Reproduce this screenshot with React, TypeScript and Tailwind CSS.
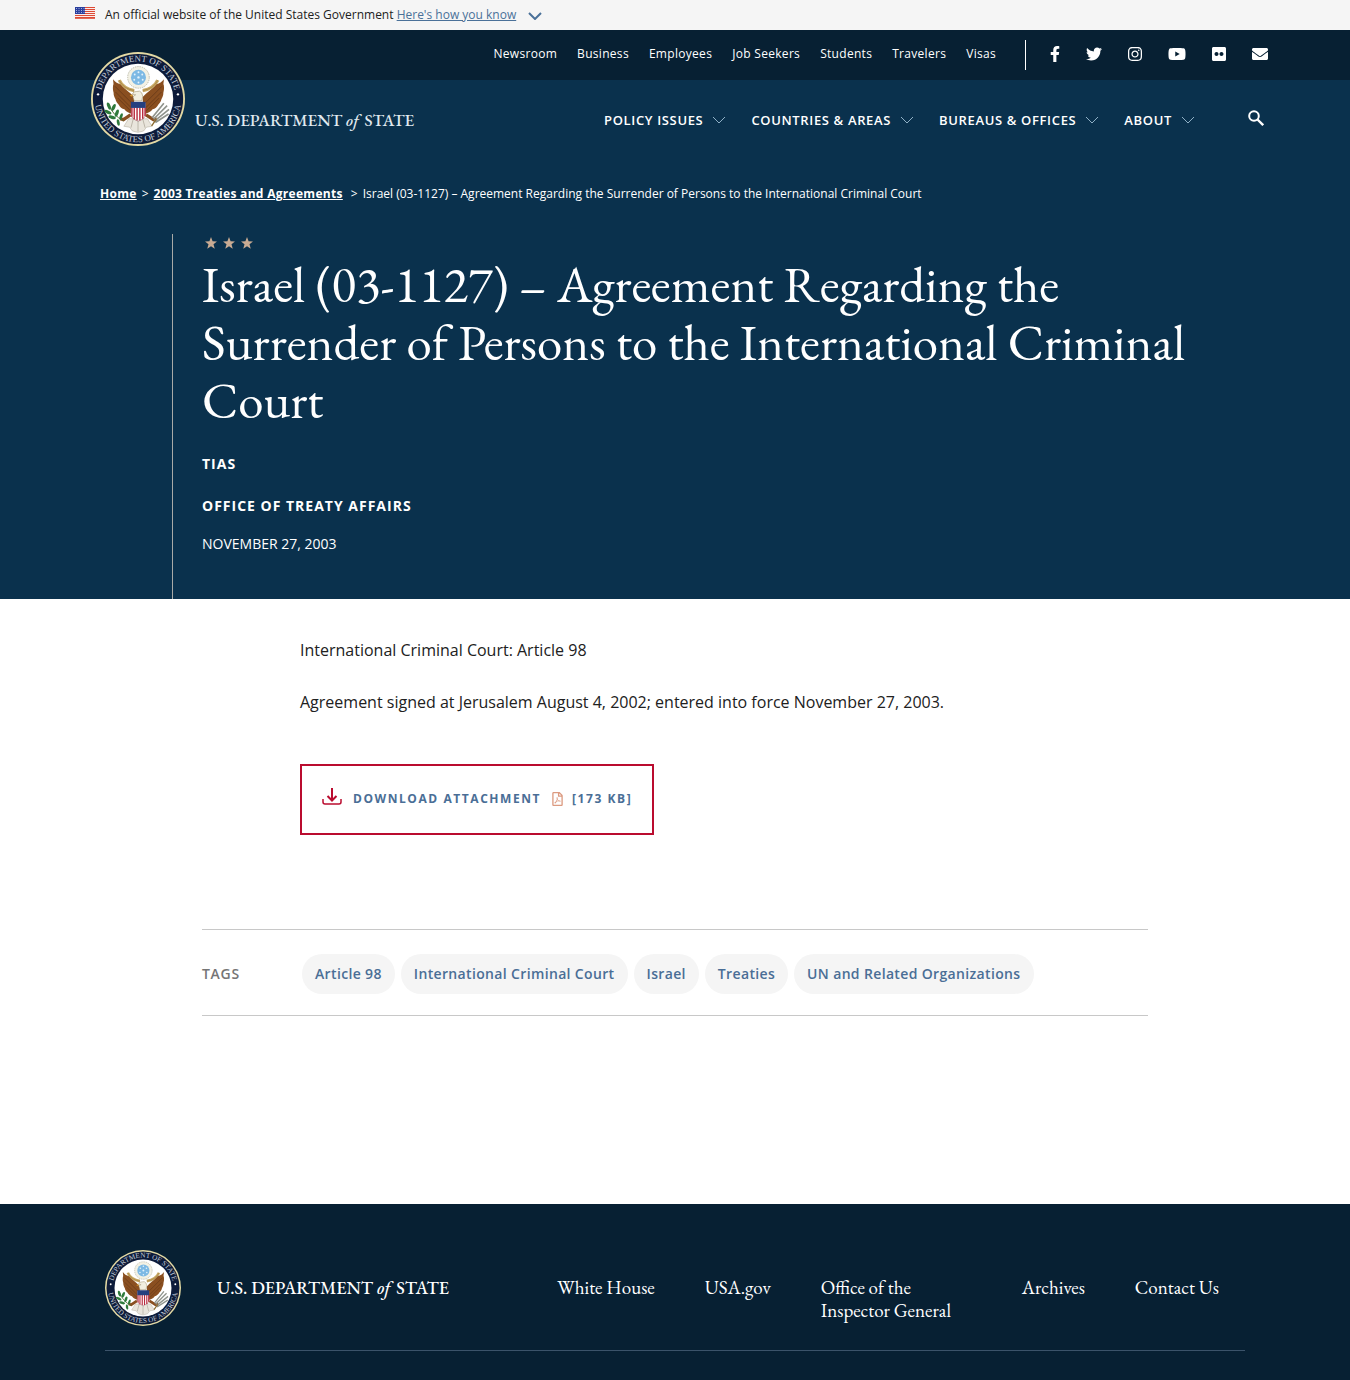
import React, { useId } from "react";
import {
  FaEnvelope,
  FaFacebookF,
  FaFlickr,
  FaInstagram,
  FaRegFilePdf,
  FaTwitter,
  FaYoutube,
} from "react-icons/fa";

const utilityLinks = ["Newsroom", "Business", "Employees", "Job Seekers", "Students", "Travelers", "Visas"];

const socialLinks = [
  { label: "Facebook", Icon: FaFacebookF, size: "h-4 w-2.5" },
  { label: "Twitter", Icon: FaTwitter, size: "h-4 w-4" },
  { label: "Instagram", Icon: FaInstagram, size: "h-4 w-3.5" },
  { label: "YouTube", Icon: FaYoutube, size: "h-4 w-[18px]" },
  { label: "Flickr", Icon: FaFlickr, size: "h-4 w-3.5" },
  { label: "Email", Icon: FaEnvelope, size: "h-4 w-4" },
];

const menus = ["Policy Issues", "Countries & Areas", "Bureaus & Offices", "About"];

const tags = ["Article 98", "International Criminal Court", "Israel", "Treaties", "UN and Related Organizations"];

function Flag() {
  return (
    <svg viewBox="0 0 20 12" className="h-3 w-5" aria-hidden="true">
      <rect width="20" height="12" fill="#fff" />
      {[0, 2, 4, 6, 8, 10].map((y) => (
        <rect key={y} y={y} width="20" height="1.1" fill="#dc4a35" />
      ))}
      <rect y="11.2" width="20" height="0.8" fill="#dc4a35" />
      <rect width="10" height="7" fill="#2a3f9d" />
      {[1.5, 3.5, 5.5].map((y) =>
        [1.5, 4, 6.5, 9].map((x) => <circle key={`${x}-${y}`} cx={x} cy={y} r="0.5" fill="#c9d2f5" />),
      )}
    </svg>
  );
}

function Seal({ className }: { className: string }) {
  const id = useId();
  return (
    <svg viewBox="0 0 200 200" className={className} role="img" aria-label="Department of State seal">
      <defs>
        <path id={`${id}t`} d="M20 100a80 80 0 0 1 160 0" />
        <path id={`${id}b`} d="M8 100a92 92 0 0 0 184 0" />
      </defs>
      <circle cx="100" cy="100" r="100" fill="#e3d9a4" />
      <circle cx="100" cy="100" r="96" fill="#0d1b3a" />
      <circle cx="100" cy="100" r="75" fill="#fff" />
      <g fill="#c3ccd9" fontFamily="Liberation Serif, serif" textAnchor="middle">
        <text fontSize="19">
          <textPath href={`#${id}t`} startOffset="50%">DEPARTMENT OF STATE</textPath>
        </text>
        <text fontSize="19">
          <textPath href={`#${id}b`} startOffset="50%">UNITED STATES OF AMERICA</textPath>
        </text>
      </g>
      <circle cx="15" cy="90" r="2.5" fill="#fff" />
      <circle cx="185" cy="90" r="2.5" fill="#fff" />
      {/* glory of stars above the eagle */}
      <circle cx="101" cy="54" r="23" fill="#f3f1e4" stroke="#b9b7a8" strokeWidth="2" strokeDasharray="3 2" />
      <circle cx="101" cy="54" r="16" fill="#7db9e4" />
      <g fill="#e4f3fc">
        <circle cx="101" cy="43" r="2" />
        <circle cx="93" cy="48" r="2" />
        <circle cx="109" cy="48" r="2" />
        <circle cx="101" cy="54" r="2.5" />
        <circle cx="92" cy="59" r="2" />
        <circle cx="110" cy="59" r="2" />
        <circle cx="101" cy="65" r="2" />
      </g>
      {/* scroll */}
      <path d="M60 60q8 18 32 22M142 60q-8 18-32 22" fill="none" stroke="#c9a964" strokeWidth="7" />
      <path d="M60 60q8 18 32 22M142 60q-8 18-32 22" fill="none" stroke="#8c6b34" strokeWidth="1" />
      {/* wings */}
      <path d="M92 96c-10-12-21-17-29-27-7-2-12-5-16-11 0 7 2 10 0 13-1 8 0 11 1 15 0 7 2 10 4 14 1 6 4 9 7 12 2 5 7 8 12 10 4 6 12 10 20 9z" fill="#8a4f20" />
      <path d="M110 96c10-12 21-17 29-27 7-2 12-5 16-11 0 7-2 10 0 13 1 8 0 11-1 15 0 7-2 10-4 14-1 6-4 9-7 12-2 5-7 8-12 10-4 6-12 10-20 9z" fill="#8a4f20" />
      <path d="M51 73l38 38M52 85l34 34M57 98l27 27M151 73l-38 38M150 85l-34 34M145 98l-27 27" stroke="#5f3517" strokeWidth="1.5" />
      {/* head and neck */}
      <path d="M92 104l-3-9 6-4-7-1q2-7 9-6 7-3 11 3 4 6 0 17z" fill="#f1eee0" stroke="#8c7a52" strokeWidth="1" />
      <path d="M88 90l-6 3 6 2z" fill="#d79b28" />
      {/* tail */}
      <path d="M80 142l-10 16 12 2 6 8 12 3 12-3 6-8 12-2-10-16z" fill="#e9e5dc" stroke="#a9a294" strokeWidth="1" />
      <path d="M90 142l-5 19M100 144v25M110 142l5 19" stroke="#a9a294" strokeWidth="1.5" />
      {/* legs */}
      <path d="M84 134l-15 10-7-2M117 134l16 10 7-2" fill="none" stroke="#8a4f20" strokeWidth="7" />
      {/* olive branch */}
      <path d="M38 112q9 24 31 34" fill="none" stroke="#4f6b32" strokeWidth="2" />
      <g fill="#2f7a3c">
        <ellipse cx="38" cy="115" rx="3.5" ry="8" transform="rotate(-20 38 115)" />
        <ellipse cx="48" cy="118" rx="3.5" ry="8" transform="rotate(25 48 118)" />
        <ellipse cx="36" cy="128" rx="3.5" ry="8" transform="rotate(-65 36 128)" />
        <ellipse cx="55" cy="130" rx="3.5" ry="8" transform="rotate(20 55 130)" />
        <ellipse cx="45" cy="139" rx="3.5" ry="8" transform="rotate(-75 45 139)" />
        <ellipse cx="64" cy="137" rx="3" ry="7" transform="rotate(20 64 137)" />
        <ellipse cx="58" cy="150" rx="3" ry="7" transform="rotate(-10 58 150)" />
      </g>
      {/* arrows */}
      <path d="M133 143l29-29M135 147l31-25M130 140l25-31M137 150l28-18" stroke="#8f938c" strokeWidth="3.5" />
      <path d="M139 143l-10 14" stroke="#8a6a2f" strokeWidth="3" />
      {/* shield */}
      <path d="M85 108h31v24q0 10-15.5 15-15.5-5-15.5-15z" fill="#fff" stroke="#7a2433" strokeWidth="1" />
      <path d="M87 118v20M92 118v25M98 118v27M104 118v27M110 118v24M115 118v18" stroke="#b8293d" strokeWidth="3" />
      <path d="M85 106h31v13h-31z" fill="#24407f" />
    </svg>
  );
}

function Wordmark({ className }: { className: string }) {
  return (
    <span className={`font-['EB_Garamond','Liberation_Serif',serif] font-medium whitespace-nowrap ${className}`}>
      U.S. DEPARTMENT <em className="mr-0.5">of</em> STATE
    </span>
  );
}

function Chevron({ className }: { className: string }) {
  return (
    <svg viewBox="0 0 14 8" className={className} fill="none" stroke="currentColor" aria-hidden="true">
      <path d="M1 1l6 6 6-6" />
    </svg>
  );
}

function SearchIcon() {
  return (
    <svg viewBox="0 0 16 16" className="mb-1 size-4" fill="none" stroke="currentColor" strokeWidth="2" aria-hidden="true">
      <circle cx="6" cy="6" r="4.8" />
      <path d="M9.5 9.5l5.7 5.7" strokeWidth="2.4" />
    </svg>
  );
}

function DownloadIcon() {
  return (
    <svg viewBox="0 0 20 18" className="mb-1 h-[18px] w-5" fill="none" stroke="#ba0c2f" aria-hidden="true">
      <path d="M10 0v12M5.5 8l4.5 4.5L14.5 8" strokeWidth="2" />
      <path d="M1 11v3q0 2 2 2h14q2 0 2-2v-3" strokeWidth="1.5" />
    </svg>
  );
}

function Stars() {
  return (
    <div className="flex gap-1.5 pl-[3px]" aria-hidden="true">
      {[0, 1, 2].map((n) => (
        <svg key={n} viewBox="0 0 24 24" className="size-3" fill="#c9ab93">
          <path d="M12 0l3.2 8.7 8.8.3-7 5.5 2.5 9L12 18.3 4.5 23.5l2.5-9L0 9l8.8-.3z" />
        </svg>
      ))}
    </div>
  );
}

export default function App() {
  return (
    <div className="flex min-h-screen flex-col bg-white font-['Open_Sans',sans-serif] text-[#212121]">
      <div className="flex h-[30px] items-center bg-[#f5f5f5] px-[75px] text-xs">
        <div className="mr-2.5 -mt-1">
          <Flag />
        </div>
        <p>
          An official website of the United States Government{" "}
          <button type="button" className="text-[#4a7199] underline">
            Here's how you know
          </button>
        </p>
        <Chevron className="mt-0.5 ml-3 h-2 w-3.5 stroke-2 text-[#4a7199]" />
      </div>

      <div className="bg-[#0a314d] text-white">
        <header>
          <div className="flex h-[50px] items-center justify-end bg-[#072033] pr-[82px]">
            <nav aria-label="Utility" className="flex gap-5 pb-0.5 text-xs tracking-wide">
              {utilityLinks.map((label) => (
                <a key={label} href="#">
                  {label}
                </a>
              ))}
            </nav>
            <div className="ml-[29px] flex h-[30px] items-center gap-[26px] border-l border-white pb-0.5 pl-6">
              {socialLinks.map(({ label, Icon, size }) => (
                <a key={label} href="#" aria-label={label}>
                  <Icon className={size} />
                </a>
              ))}
            </div>
          </div>
          <div className="flex h-[90px] items-start justify-between pr-[86px] pl-[91px]">
            <a href="#" className="relative -mt-7 flex gap-2.5">
              <Seal className="size-[94px]" />
              <Wordmark className="mt-14 text-[17px] leading-6 text-[#e1eaf0]" />
            </a>
            <div className="flex items-center pt-7">
              <nav aria-label="Main" className="flex gap-[25px]">
                {menus.map((label) => (
                  <button
                    key={label}
                    type="button"
                    className="flex items-center gap-[9px] text-[13px] leading-6 font-semibold tracking-wider uppercase"
                  >
                    {label}
                    <Chevron className="h-2 w-3.5 text-[#8fb0c6]" />
                  </button>
                ))}
              </nav>
              <button type="button" aria-label="Search" className="ml-[53px]">
                <SearchIcon />
              </button>
            </div>
          </div>
        </header>

        <nav aria-label="Breadcrumb" className="flex gap-[5px] px-[100px] pt-4 text-xs leading-4">
          <a href="#" className="font-bold tracking-wide underline">
            Home
          </a>
          <span>&gt;</span>
          <a href="#" className="font-bold tracking-wide underline">
            2003 Treaties and Agreements
          </a>
          <span className="ml-[3px]">&gt;</span>
          <span>Israel (03-1127) – Agreement Regarding the Surrender of Persons to the International Criminal Court</span>
        </nav>

        <div className="mt-8 mr-[140px] ml-[172px] border-l border-[#a9aaa7] pt-[3px] pb-[45px] pl-[29px]">
          <Stars />
          <h1 className="mt-1.5 font-['EB_Garamond','Liberation_Serif',serif] text-[51px] leading-[58px]">
            Israel (03-1127) – Agreement Regarding the Surrender of Persons to the International Criminal Court
          </h1>
          <p className="mt-[25px] text-sm font-bold tracking-[1px]">TIAS</p>
          <p className="mt-[22px] text-sm font-bold tracking-[1px]">OFFICE OF TREATY AFFAIRS</p>
          <p className="mt-[18px] text-sm">NOVEMBER 27, 2003</p>
        </div>
      </div>

      <main className="flex-1 pt-[38px] pb-[188px]">
        <div className="px-[300px] leading-[26px]">
          <p>International Criminal Court: Article 98</p>
          <p className="mt-[26px] whitespace-nowrap">
            Agreement signed at Jerusalem August 4, 2002; entered into force November 27, 2003.
          </p>
          <a
            href="#"
            className="mt-[49px] inline-flex h-[71px] items-center border-2 border-[#ba0c2f] px-5 pb-0.5 text-xs font-bold tracking-[0.13em] whitespace-nowrap text-[#4a6e96]"
          >
            <DownloadIcon />
            <span className="ml-[11px]">DOWNLOAD ATTACHMENT</span>
            <FaRegFilePdf className="mr-2 ml-2.5 h-3.5 w-[13px] text-[#dc9a80]" />
            <span>[173 KB]</span>
          </a>
        </div>

        <section className="mx-[202px] mt-[94px] flex items-center border-y border-[#c8c8c8] pt-6 pb-[21px] text-sm font-semibold">
          <h2 className="w-[100px] tracking-wider text-[#757575]">TAGS</h2>
          <ul className="flex gap-1.5 tracking-wide text-[#4a6e96]">
            {tags.map((tag) => (
              <li key={tag}>
                <a href="#" className="flex h-10 items-center rounded-full bg-[#f5f5f5] px-[13px]">
                  {tag}
                </a>
              </li>
            ))}
          </ul>
        </section>
      </main>

      <footer className="bg-[#072033] text-white">
        <div className="mx-auto flex max-w-[1140px] items-start border-b border-[#3b536a] pt-[46px] pb-6">
          <Seal className="size-[76px]" />
          <Wordmark className="mt-[26px] ml-9 text-lg leading-6" />
          <nav
            aria-label="Footer"
            className="mt-[26px] mr-[26px] ml-auto flex gap-[50px] font-['EB_Garamond','Liberation_Serif',serif] text-[19px] leading-[23px] whitespace-nowrap"
          >
            <a href="#">White House</a>
            <a href="#">USA.gov</a>
            <a href="#" className="w-[151px] whitespace-normal">
              Office of the Inspector General
            </a>
            <a href="#">Archives</a>
            <a href="#">Contact Us</a>
          </nav>
        </div>
        <div className="h-[29px]" />
      </footer>
    </div>
  );
}
